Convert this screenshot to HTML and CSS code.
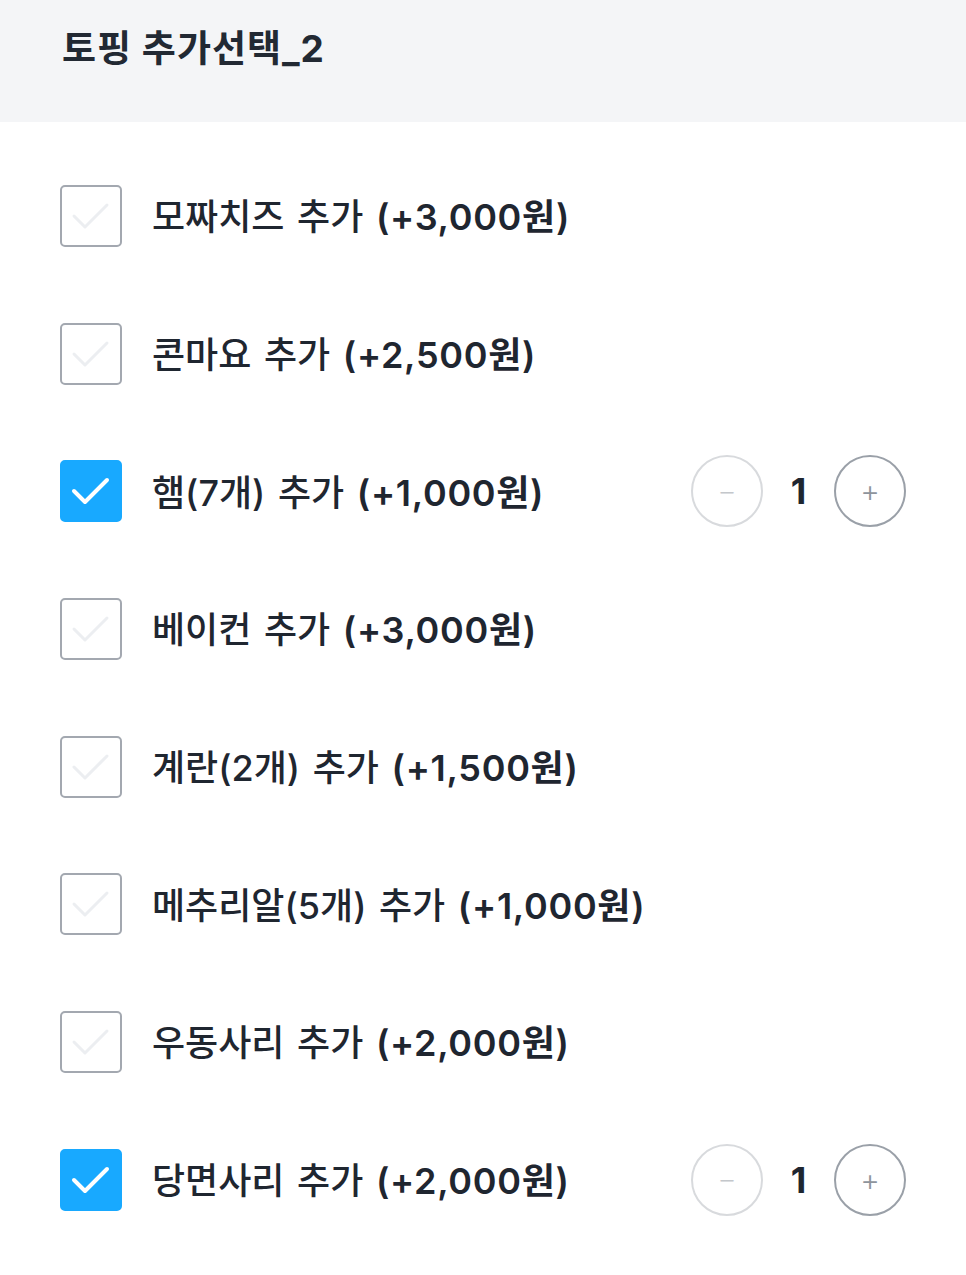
FILE: index.html
```html
<!DOCTYPE html>
<html lang="ko">
<head>
<meta charset="utf-8">
<link rel="stylesheet" href="styles.css">
</head>
<body>
<div class="header"><h1 class="title">토핑 추가선택_2</h1></div>
<ul class="list">
  <li class="row">
    <span class="box"><svg viewBox="0 0 62 62"><path d="M14 31 L25 42 L47 20"/></svg></span>
    <span class="label">모짜치즈 추가 <b>(+3,000원)</b></span>
  </li>
  <li class="row">
    <span class="box"><svg viewBox="0 0 62 62"><path d="M14 31 L25 42 L47 20"/></svg></span>
    <span class="label">콘마요 추가 <b>(+2,500원)</b></span>
  </li>
  <li class="row">
    <span class="box on"><svg viewBox="0 0 62 62"><path d="M14 31 L25 42 L47 20"/></svg></span>
    <span class="label">햄(7개) 추가 <b>(+1,000원)</b></span>
    <div class="counter">
      <span class="btn minus">–</span>
      <span class="qty">1</span>
      <span class="btn plus">+</span>
    </div>
  </li>
  <li class="row">
    <span class="box"><svg viewBox="0 0 62 62"><path d="M14 31 L25 42 L47 20"/></svg></span>
    <span class="label">베이컨 추가 <b>(+3,000원)</b></span>
  </li>
  <li class="row">
    <span class="box"><svg viewBox="0 0 62 62"><path d="M14 31 L25 42 L47 20"/></svg></span>
    <span class="label">계란(2개) 추가 <b>(+1,500원)</b></span>
  </li>
  <li class="row">
    <span class="box"><svg viewBox="0 0 62 62"><path d="M14 31 L25 42 L47 20"/></svg></span>
    <span class="label">메추리알(5개) 추가 <b>(+1,000원)</b></span>
  </li>
  <li class="row">
    <span class="box"><svg viewBox="0 0 62 62"><path d="M14 31 L25 42 L47 20"/></svg></span>
    <span class="label">우동사리 추가 <b>(+2,000원)</b></span>
  </li>
  <li class="row">
    <span class="box on"><svg viewBox="0 0 62 62"><path d="M14 31 L25 42 L47 20"/></svg></span>
    <span class="label">당면사리 추가 <b>(+2,000원)</b></span>
    <div class="counter">
      <span class="btn minus">–</span>
      <span class="qty">1</span>
      <span class="btn plus">+</span>
    </div>
  </li>
</ul>
</body>
</html>
```
FILE: styles.css
```css
* { box-sizing: border-box; }
html, body { margin: 0; padding: 0; background: #fff; }
body {
  font-family: Inter, "Noto Sans CJK KR", "Noto Sans", sans-serif;
  color: #1f2630;
}
.header {
  background: #f4f5f7;
  height: 122px;
  padding: 0 62px;
  display: flex;
  align-items: center;
}
.title {
  margin: 0 0 24px 0;
  font-size: 37px;
  font-weight: 700;
  letter-spacing: 1px;
  color: #222933;
  line-height: 1.2;
}
.list {
  list-style: none;
  margin: 0;
  padding: 25px 60px 0 60px;
}
.row {
  height: 137.7px;
  display: flex;
  align-items: center;
}
.box {
  width: 62px;
  height: 62px;
  flex: none;
  border: 2px solid #a3a8b0;
  border-radius: 5px;
  display: flex;
  align-items: center;
  justify-content: center;
  margin-right: 30px;
}
.box svg { width: 62px; height: 62px; margin: -2px; }
.box path {
  fill: none;
  stroke: #eceef1;
  stroke-width: 3;
  stroke-linecap: round;
  stroke-linejoin: round;
}
.box.on { background: #18a9ff; border-color: #18a9ff; }
.box.on path { stroke: #fff; stroke-width: 4; }
.label {
  font-size: 36px;
  font-weight: 500;
  line-height: 1.2;
  white-space: nowrap;
  word-spacing: 3px;
  padding-top: 4px;
}
.label b { font-weight: 600; letter-spacing: 0.7px; }
.counter {
  margin-left: auto;
  display: flex;
  align-items: center;
}
.btn {
  width: 72px;
  height: 72px;
  border-radius: 50%;
  display: flex;
  align-items: center;
  justify-content: center;
  font-size: 26px;
  font-weight: 300;
}
.minus { border: 2px solid #d8dadd; color: #c4c7cb; }
.plus { border: 2px solid #9aa0a8; color: #8e949c; font-size: 30px; }
.qty {
  width: 71px;
  text-align: center;
  font-size: 36px;
  font-weight: 700;
  color: #1f2630;
}
```
